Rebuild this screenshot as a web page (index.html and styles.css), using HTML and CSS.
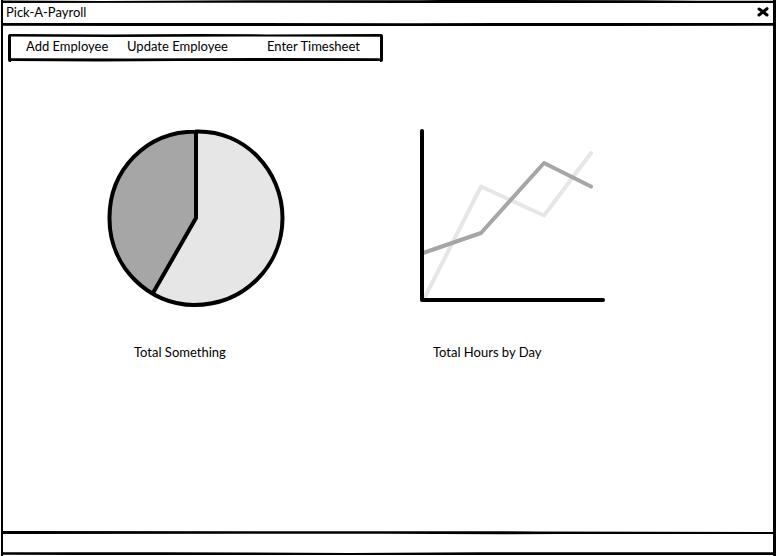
FILE: index.html
```html
<!DOCTYPE html>
<html lang="en">
<head>
<meta charset="utf-8">
<meta name="viewport" content="width=device-width, initial-scale=1">
<title>Pick-A-Payroll</title>
<link rel="stylesheet" href="styles.css">
</head>
<body>
<div class="window">
  <svg class="rule" viewBox="0 0 776 4" preserveAspectRatio="none" aria-hidden="true"><path d="M0 .6 L100 .9 L250 .3 L420 .3 L440 0 L640 .2 L700 .8 L776 .8 V3 L620 3 L500 3 L410 2.900 L200 2.700 L0 3Z"/></svg>
  <header class="titlebar">
    <h1 class="title">Pick-A-Payroll</h1>
    <button class="close" type="button" aria-label="Close">
      <svg viewBox="0 0 12 10" aria-hidden="true"><path d="M2 2 Q5 4 10 8 M10 1.700 Q7 4 2 8"/></svg>
    </button>
  </header>
  <svg class="rule" viewBox="0 0 776 4" preserveAspectRatio="none" aria-hidden="true"><path d="M0 0 L250 0 L410 .3 L500 0 L776 0 V2.700 L600 2.900 L520 3 L400 3 L220 3 L140 3 L0 2.700Z"/></svg>
  <main class="content">
    <nav class="menu" aria-label="Payroll">
      <svg class="rule" viewBox="0 0 375 4" preserveAspectRatio="none" aria-hidden="true"><path d="M0 0 L100 .5 L190 0 L260 .4 L375 0 V2.800 L240 2.600 L100 3 L0 2.600Z"/></svg>
      <div class="menu-items">
        <button type="button">Add Employee</button>
        <button type="button">Update Employee</button>
        <button type="button">Enter Timesheet</button>
      </div>
      <svg class="rule" viewBox="0 0 375 4" preserveAspectRatio="none" aria-hidden="true"><path d="M0 .3 L120 .5 L260 0 L375 .2 V3 L300 3.100 L170 3 L90 3.600 L0 3Z"/></svg>
    </nav>
    <div class="charts">
      <figure class="chart">
        <svg class="plot" viewBox="0 0 188 180" role="img" aria-label="Total something pie chart">
          <path class="light" d="M89 90 V3.500 C139 2 176 43 175.500 90 C175 139 135 177 87 177 C72 177 59 173 46 165Z"/>
          <path class="dark" d="M89 90 V3.500 C38 4 2 42 2.200 91 C2.200 122 20 151 46 165Z"/>
          <path class="ink" d="M89 3.500 C138 2 175.500 43 175.500 90 C175.500 138 137 177 87 177 C42 177 2.500 139 2.500 91 C2 42 39 3.500 89 3.500 V90 L46 165"/>
        </svg>
        <figcaption class="pie-caption">Total Something</figcaption>
      </figure>
      <figure class="chart">
        <svg class="plot" viewBox="0 0 188 180" role="img" aria-label="Total hours by day line chart">
          <path class="line-light" d="M4 171 L61 58.500 L124 87.500 L171 25"/>
          <path class="line-dark" d="M3 125 L61 105 L124 35 L171 58.500"/>
          <path class="ink" d="M2 3 V172 H183"/>
        </svg>
        <figcaption class="line-caption">Total Hours by Day</figcaption>
      </figure>
    </div>
  </main>
  <svg class="rule" viewBox="0 0 776 4" preserveAspectRatio="none" aria-hidden="true"><path d="M0 0 L400 .2 L540 .4 L776 .9 V2.900 L560 2.900 L500 3.200 L380 2.800 L0 3Z"/></svg>
  <footer class="statusbar"></footer>
  <svg class="rule" viewBox="0 0 776 4" preserveAspectRatio="none" aria-hidden="true"><path d="M0 .3 L160 .2 L350 1 L480 .3 L776 .2 V3 L520 3 L400 3 L170 3 L80 3 L0 2.800Z"/></svg>
</div>
</body>
</html>
```
FILE: styles.css
```css
* { box-sizing: border-box; }

body {
  margin: 0;
  background: #fff;
  color: #000;
  font: 13px/20px Lato, "Liberation Sans", sans-serif;
}

button {
  padding: 0;
  border: 0;
  background: none;
  color: inherit;
  font: inherit;
  text-align: left;
  cursor: pointer;
}

svg { display: block; }

.window {
  display: flex;
  flex-direction: column;
  min-height: 100vh;
  margin: 0 0 0 1px;
  border: solid #000;
  border-width: 0 3px 0 2px;
}

.rule {
  flex: none;
  width: 0;
  min-width: 100%;
  height: 4px;
}

.titlebar {
  display: flex;
  align-items: flex-start;
  justify-content: space-between;
  height: 19px;
  padding: 0 4px 0 3px;
}

.title {
  margin: 0;
  font: inherit;
  line-height: 16px;
}

.close svg {
  width: 12px;
  height: 10px;
  margin-top: 3px;
  fill: none;
  stroke: #000;
  stroke-width: 3;
  stroke-linecap: round;
}

.content {
  flex: 1;
  padding: 7px 5px;
}

.menu {
  width: fit-content;
  border: solid #000;
  border-width: 0 3px;
  border-radius: 2px;
}

.menu-items {
  display: grid;
  grid-template-columns: 101px 140px auto;
  padding: 0 20px 4px 15px;
  line-height: 16px;
}

.charts {
  display: grid;
  grid-template-columns: 313px auto;
  padding: 66px 99px 0;
}

.chart { margin: 0; }

.plot {
  width: 188px;
  height: 180px;
}

figcaption { margin-top: 34px; }

.pie-caption { padding-left: 27px; }

.line-caption { padding-left: 13px; }

.light { fill: #e6e6e6; }

.dark { fill: #a6a6a6; }

.ink,
.line-light,
.line-dark {
  fill: none;
  stroke: #000;
  stroke-width: 4;
  stroke-linecap: round;
  stroke-linejoin: round;
}

.line-light { stroke: #e6e6e6; }

.line-dark { stroke: #a6a6a6; }

.statusbar { height: 17px; }
```
